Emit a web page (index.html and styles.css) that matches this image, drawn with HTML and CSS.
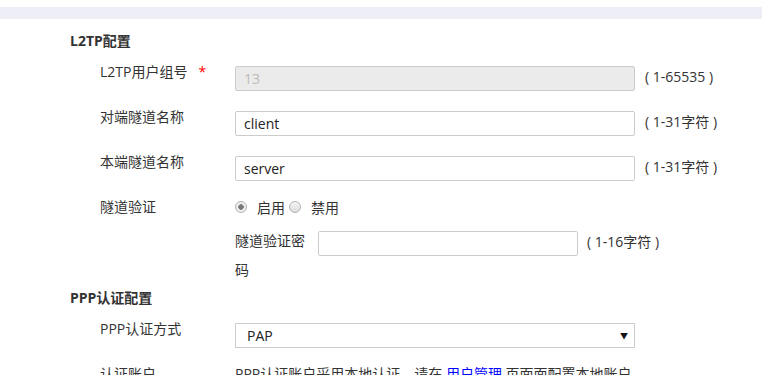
FILE: index.html
```html
<!DOCTYPE html>
<html lang="zh-CN">
<head>
    <meta charset="utf-8">
    <title>L2TP配置</title>
    <link rel="stylesheet" href="styles.css">
</head>
<body>
    <div class="top-band"></div>

    <h3 class="section-title">L2TP配置</h3>
    <div class="row">
        <label class="row-label">L2TP用户组号<span class="required">*</span></label>
        <input class="text-input disabled" type="text" value="13" disabled>
        <span class="hint">( 1-65535 )</span>
    </div>
    <div class="row">
        <label class="row-label">对端隧道名称</label>
        <input class="text-input" type="text" value="client">
        <span class="hint">( 1-31字符 )</span>
    </div>
    <div class="row">
        <label class="row-label">本端隧道名称</label>
        <input class="text-input" type="text" value="server">
        <span class="hint">( 1-31字符 )</span>
    </div>
    <div class="row radio-row">
        <label class="row-label">隧道验证</label>
        <div class="radios">
            <label class="radio-item"><input class="radio" type="radio" name="auth" checked><span class="radio-text">启用</span></label>
            <label class="radio-item"><input class="radio" type="radio" name="auth"><span class="radio-text">禁用</span></label>
        </div>
    </div>
    <div class="row sub-row">
        <label class="sub-label">隧道验证密码</label>
        <input class="text-input short" type="password">
        <span class="hint">( 1-16字符 )</span>
    </div>

    <h3 class="section-title after-sub">PPP认证配置</h3>
    <div class="row">
        <label class="row-label">PPP认证方式</label>
        <div class="select-box">
            <span class="select-value">PAP</span>
            <span class="select-arrow">▼</span>
        </div>
    </div>
    <div class="row">
        <label class="row-label">认证账户</label>
        <p class="note">PPP认证账户采用本地认证，请在 <a class="link" href="#">用户管理</a> 页面面配置本地账户</p>
    </div>
</body>
</html>
```

FILE: styles.css
```css
body{
    margin: 0;
    background-color: #fff;
    color: #333;
    font-family: "Open Sans", "Noto Sans CJK SC", sans-serif;
    font-size: 14px;
}
.top-band{
    height: 12px;
    margin-top: 7px;
    background-color: #eeeef6;
}
.section-title{
    margin: 12px 0 15px 70px;
    font-size: 14px;
    line-height: 20px;
    font-weight: bold;
    color: #333;
}
.section-title.after-sub{
    margin-top: 4px;
}
.row{
    display: flex;
    align-items: flex-start;
    margin: 0 0 20px 100px;
}
.row-label{
    width: 135px;
    flex: none;
    line-height: 12px;
    color: #333;
}
.required{
    margin-left: 11px;
    color: #f00;
}
.text-input{
    box-sizing: border-box;
    width: 400px;
    height: 25px;
    margin: 0;
    padding: 0 8px;
    border: 1px solid #ccc;
    border-radius: 2px;
    font-family: "Open Sans", "Noto Sans CJK SC", sans-serif;
    font-size: 14px;
    color: #222;
    background-color: #fff;
}
.text-input.disabled{
    background-color: #ebebeb;
    color: #bbb;
}
.text-input.short{
    width: 260px;
    margin-top: 5px;
}
.hint{
    margin-left: 10px;
    line-height: 22px;
    color: #333;
}
.sub-row .hint{
    margin-left: 9px;
    margin-top: 5px;
}
.radio-row{
    height: 25px;
    margin-bottom: 0;
}
.radios{
    display: flex;
    align-items: center;
    height: 12px;
}
.radio-item{
    display: flex;
    align-items: center;
}
.radio{
    appearance: none;
    -webkit-appearance: none;
    width: 12px;
    height: 12px;
    margin: 0 10px 0 0;
    border: 1px solid #b4b4b4;
    border-radius: 50%;
    background: linear-gradient(#f6f6f6, #dcdcdc);
    box-sizing: border-box;
}
.radio:checked{
    background: radial-gradient(circle, #7a7a7a 0, #7a7a7a 2.5px, #eee 3px);
}
.radio-text{
    margin-right: 4px;
}
.sub-row{
    margin-bottom: 0;
}
.sub-label{
    width: 75px;
    margin-left: 135px;
    margin-right: 8px;
    flex: none;
    line-height: 29px;
}
.select-box{
    box-sizing: border-box;
    width: 400px;
    height: 25px;
    display: flex;
    align-items: center;
    justify-content: space-between;
    padding: 0 6px 0 11px;
    border: 1px solid #ccc;
    color: #222;
}
.select-arrow{
    font-size: 8px;
    color: #111;
}
.note{
    margin: 0;
    line-height: 12px;
    color: #333;
}
.link{
    color: #00f;
    text-decoration: none;
}
```
